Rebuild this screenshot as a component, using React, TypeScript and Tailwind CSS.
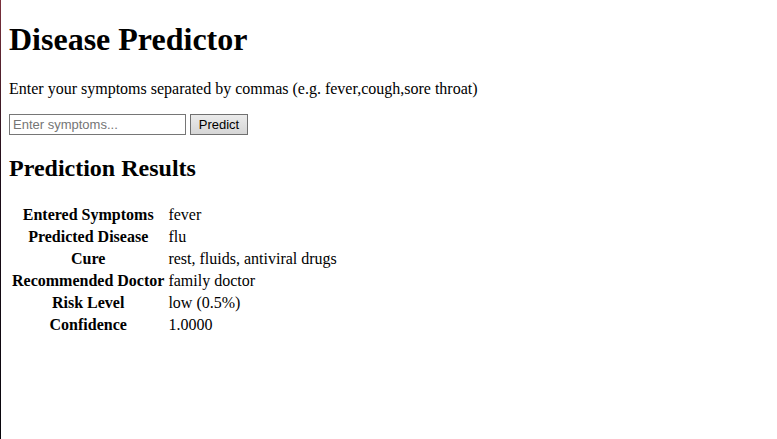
import React, { useState } from "react";

const rows = [
  { label: "Entered Symptoms", value: "fever" },
  { label: "Predicted Disease", value: "flu" },
  { label: "Cure", value: "rest, fluids, antiviral drugs" },
  { label: "Recommended Doctor", value: "family doctor" },
  { label: "Risk Level", value: "low (0.5%)" },
  { label: "Confidence", value: "1.0000" },
];

export default function App() {
  const [symptoms, setSymptoms] = useState("");

  return (
    <div className="flex min-h-screen bg-white font-['Liberation_Serif',serif] text-base text-black">
      <div className="w-px shrink-0 bg-linear-to-b from-[#7c303c] via-[#1c0c18] via-40% to-[#08060c]" />
      <main className="min-w-0 flex-1 px-2 pt-5">
        <h1 className="text-[32px] leading-[38px] font-bold">Disease Predictor</h1>
        <label htmlFor="symptoms" className="mt-[22px] block leading-[18px]">
          Enter your symptoms separated by commas (e.g. fever,cough,sore throat)
        </label>
        <form
          className="mt-4 flex gap-1 font-['Liberation_Sans',sans-serif] text-[13px] leading-4"
          onSubmit={(event) => event.preventDefault()}
        >
          <input
            id="symptoms"
            type="text"
            value={symptoms}
            onChange={(event) => setSymptoms(event.target.value)}
            placeholder="Enter symptoms..."
            className="h-[21px] w-[177px] border border-[#767676] bg-white px-[3px] placeholder:text-[#757575]"
          />
          <button
            type="submit"
            className="h-[21px] w-[58px] border border-[#707070] bg-linear-to-b from-[#ebebeb] to-[#d6d6d6]"
          >
            Predict
          </button>
        </form>
        <h2 className="mt-5 text-2xl leading-[26px] font-bold">Prediction Results</h2>
        <table className="mt-[22px] border-separate border-spacing-0.5">
          <tbody>
            {rows.map((row) => (
              <tr key={row.label}>
                <th scope="row" className="p-px text-center leading-[18px] font-bold">
                  {row.label}
                </th>
                <td className="p-px leading-[18px]">{row.value}</td>
              </tr>
            ))}
          </tbody>
        </table>
      </main>
    </div>
  );
}
